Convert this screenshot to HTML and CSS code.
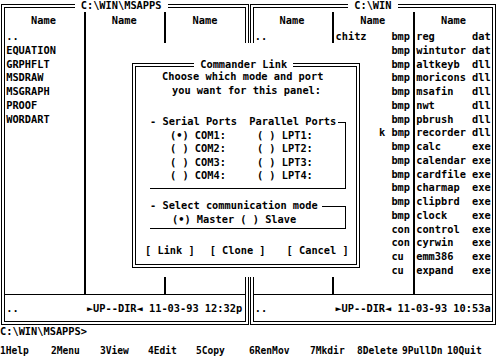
FILE: index.html
```html
<!DOCTYPE html>
<html>
<head>
<meta charset="utf-8">
<title>Norton Commander</title>
<link rel="stylesheet" href="styles.css">
</head>
<body>
<div class="screen">
  <div class="panels">
    <div class="panel panel-left">
      <div class="title"> C:\WIN\MSAPPS </div>
      <div class="cols">
        <div class="col l1">
          <div class="head">    Name</div>
          <div class="row">..</div>
          <div class="row">EQUATION</div>
          <div class="row">GRPHFLT</div>
          <div class="row">MSDRAW</div>
          <div class="row">MSGRAPH</div>
          <div class="row">PROOF</div>
          <div class="row">WORDART</div>
        </div>
        <div class="col l2">
          <div class="head">    Name</div>
        </div>
        <div class="col l3">
          <div class="head">    Name</div>
        </div>
      </div>
      <div class="status l-status">..           ►UP--DIR◄ 11-03-93 12:32p</div>
    </div>
    <div class="panel panel-right">
      <div class="title"> C:\WIN </div>
      <div class="cols">
        <div class="col r1">
          <div class="head">    Name</div>
          <div class="row">..</div>
        </div>
        <div class="col r2">
          <div class="head">    Name</div>
          <div class="row">chitz    bmp</div>
          <div class="row ext">bmp</div>
          <div class="row ext">bmp</div>
          <div class="row ext">bmp</div>
          <div class="row ext">bmp</div>
          <div class="row ext">bmp</div>
          <div class="row ext">bmp</div>
          <div class="row tail">k bmp</div>
          <div class="row ext">bmp</div>
          <div class="row ext">bmp</div>
          <div class="row ext">bmp</div>
          <div class="row ext">bmp</div>
          <div class="row ext">bmp</div>
          <div class="row ext">bmp</div>
          <div class="row ext">con</div>
          <div class="row ext">con</div>
          <div class="row ext">cu</div>
          <div class="row ext">cu</div>
        </div>
        <div class="col r3">
          <div class="head">    Name</div>
          <div class="row">reg      dat</div>
          <div class="row">wintutor dat</div>
          <div class="row">altkeyb  dll</div>
          <div class="row">moricons dll</div>
          <div class="row">msafin   dll</div>
          <div class="row">nwt      dll</div>
          <div class="row">pbrush   dll</div>
          <div class="row">recorder dll</div>
          <div class="row">calc     exe</div>
          <div class="row">calendar exe</div>
          <div class="row">cardfile exe</div>
          <div class="row">charmap  exe</div>
          <div class="row">clipbrd  exe</div>
          <div class="row">clock    exe</div>
          <div class="row">control  exe</div>
          <div class="row">cyrwin   exe</div>
          <div class="row">emm386   exe</div>
          <div class="row">expand   exe</div>
        </div>
      </div>
      <div class="status r-status">..           ►UP--DIR◄ 11-03-93 10:53a</div>
    </div>
  </div>
  <div class="prompt">C:\WIN\MSAPPS&gt;</div>
  <div class="keys">
    <span class="key k1">1Help</span>
    <span class="key k2">2Menu</span>
    <span class="key k3">3View</span>
    <span class="key k4">4Edit</span>
    <span class="key k5">5Copy</span>
    <span class="key k6">6RenMov</span>
    <span class="key k7">7Mkdir</span>
    <span class="key k8">8Delete</span>
    <span class="key k9">9PullDn</span>
    <span class="key k10">10Quit</span>
  </div>

  <div class="clear">
    <div class="dialog">
      <div class="d-title"> Commander Link </div>
      <div class="d-text d-line1">Choose which mode and port</div>
      <div class="d-text d-line2">you want for this panel:</div>
      <div class="group group-ports">
        <div class="group-head"><span class="g-label">- Serial Ports  Parallel Ports</span><span class="rule rule-ports"></span></div>
        <div class="group-body body-ports">
          <div class="d-text opt">(•) COM1:     ( ) LPT1:</div>
          <div class="d-text opt">( ) COM2:     ( ) LPT2:</div>
          <div class="d-text opt">( ) COM3:     ( ) LPT3:</div>
          <div class="d-text opt">( ) COM4:     ( ) LPT4:</div>
        </div>
      </div>
      <div class="group group-mode">
        <div class="group-head"><span class="g-label">- Select communication mode</span><span class="rule rule-mode"></span></div>
        <div class="group-body body-mode">
          <div class="d-text opt-mode">(•) Master ( ) Slave</div>
        </div>
      </div>
      <div class="buttons">
        <span class="btn btn-link">[ Link ]</span>
        <span class="btn btn-clone">[ Clone ]</span>
        <span class="btn btn-cancel">[ Cancel ]</span>
      </div>
    </div>
  </div>
</div>
</body>
</html>
```

FILE: styles.css
```css
* {
  box-sizing: border-box;
  margin: 0;
  padding: 0;
}

html, body {
  background: #fff;
}

body {
  margin: 0;
}

.screen {
  position: relative;
  width: 497px;
  height: 362px;
  overflow: hidden;
  background: #fff;
  color: #000;
  font-family: "DejaVu Sans Mono", "Liberation Mono", monospace;
  font-weight: bold;
  font-size: 10.32px;
}

.panels {
  display: flex;
  padding-top: 4px;
  height: 325px;
}

.panel {
  position: relative;
  height: 321px;
  border: 4px double #000;
  display: flex;
  flex-direction: column;
}

.panel-left {
  margin-left: 1px;
  width: 248px;
}

.panel-right {
  margin-left: 1px;
  width: 246px;
}

.title {
  position: absolute;
  top: -8px;
  height: 10px;
  line-height: 10px;
  background: #fff;
  white-space: pre;
}

.panel-left .title {
  left: 69.5px;
}

.panel-right .title {
  left: 94px;
}

.cols {
  display: flex;
  margin-top: 4px;
  height: 282px;
}

.col {
  display: flex;
  flex-direction: column;
}

.col + .col {
  border-left: 2px solid #000;
}

.head {
  height: 18px;
  line-height: 16px;
  white-space: pre;
}

.row {
  height: 13.76px;
  line-height: 13.76px;
  white-space: pre;
}

.row.ext {
  padding-left: 55.9px;
}

.row.tail {
  padding-left: 43.5px;
}

.l1 { width: 79px; padding-left: 1.2px; }
.l2 { width: 80px; padding-left: 1px; }
.l3 { flex: 1; padding-left: 1.7px; }
.r1 { width: 78px; padding-left: 0.7px; }
.r2 { width: 81px; padding-left: 1.5px; }
.r3 { flex: 1; padding-left: 1.2px; }

.status {
  border-top: 1px solid #000;
  height: 27px;
  line-height: 26px;
  white-space: pre;
}

.l-status { padding-left: 1.2px; }
.r-status { padding-left: 0.7px; }

.prompt {
  height: 12px;
  line-height: 12px;
  white-space: pre;
}

.keys {
  display: flex;
  margin-top: 8px;
  height: 12px;
  line-height: 12px;
  font-size: 9.6px;
}

.key { white-space: pre; }
.k1 { width: 51px; }
.k2 { width: 49px; }
.k3 { width: 48px; }
.k4 { width: 48px; }
.k5 { width: 53px; }
.k6 { width: 61px; }
.k7 { width: 47px; }
.k8 { width: 45px; }
.k9 { width: 45px; }

/* Commander Link dialog overlay */
.clear {
  position: absolute;
  left: 124px;
  top: 43px;
  width: 255px;
  height: 234px;
  background: #fff;
  padding-left: 8px;
  padding-top: 20px;
}

.dialog {
  position: relative;
  width: 228px;
  height: 205px;
  border: 4px double #000;
  background: #fff;
}

.d-title {
  position: absolute;
  top: -8px;
  left: 58px;
  height: 10px;
  line-height: 10px;
  background: #fff;
  white-space: pre;
}

.d-text {
  height: 13.5px;
  line-height: 13.5px;
  white-space: pre;
}

.d-line1 {
  margin-top: 3px;
  padding-left: 26px;
}

.d-line2 {
  padding-left: 36px;
}

.group {
  margin-left: 14px;
  width: 196px;
}

.group-ports {
  margin-top: 18.3px;
}

.group-mode {
  margin-top: 10.5px;
}

.group-head {
  display: flex;
  height: 13.5px;
  line-height: 13.5px;
}

.g-label {
  white-space: pre;
}

.rule {
  flex: 1;
  margin-top: 6.5px;
  border-top: 1px solid #000;
  border-right: 1px solid #000;
}

.rule-ports { margin-left: 2px; }
.rule-mode { margin-left: 4px; }

.group-body {
  border-right: 1px solid #000;
  border-bottom: 1px solid #000;
}

.body-ports { padding-bottom: 5px; }
.body-mode { padding-bottom: 2px; }

.opt { padding-left: 20px; }
.opt-mode { padding-left: 22px; }

.buttons {
  display: flex;
  margin-top: 15px;
  padding-left: 9px;
  height: 13.5px;
  line-height: 13.5px;
}

.btn { white-space: pre; }
.btn-clone { margin-left: 15px; }
.btn-cancel { margin-left: 21px; }
```
